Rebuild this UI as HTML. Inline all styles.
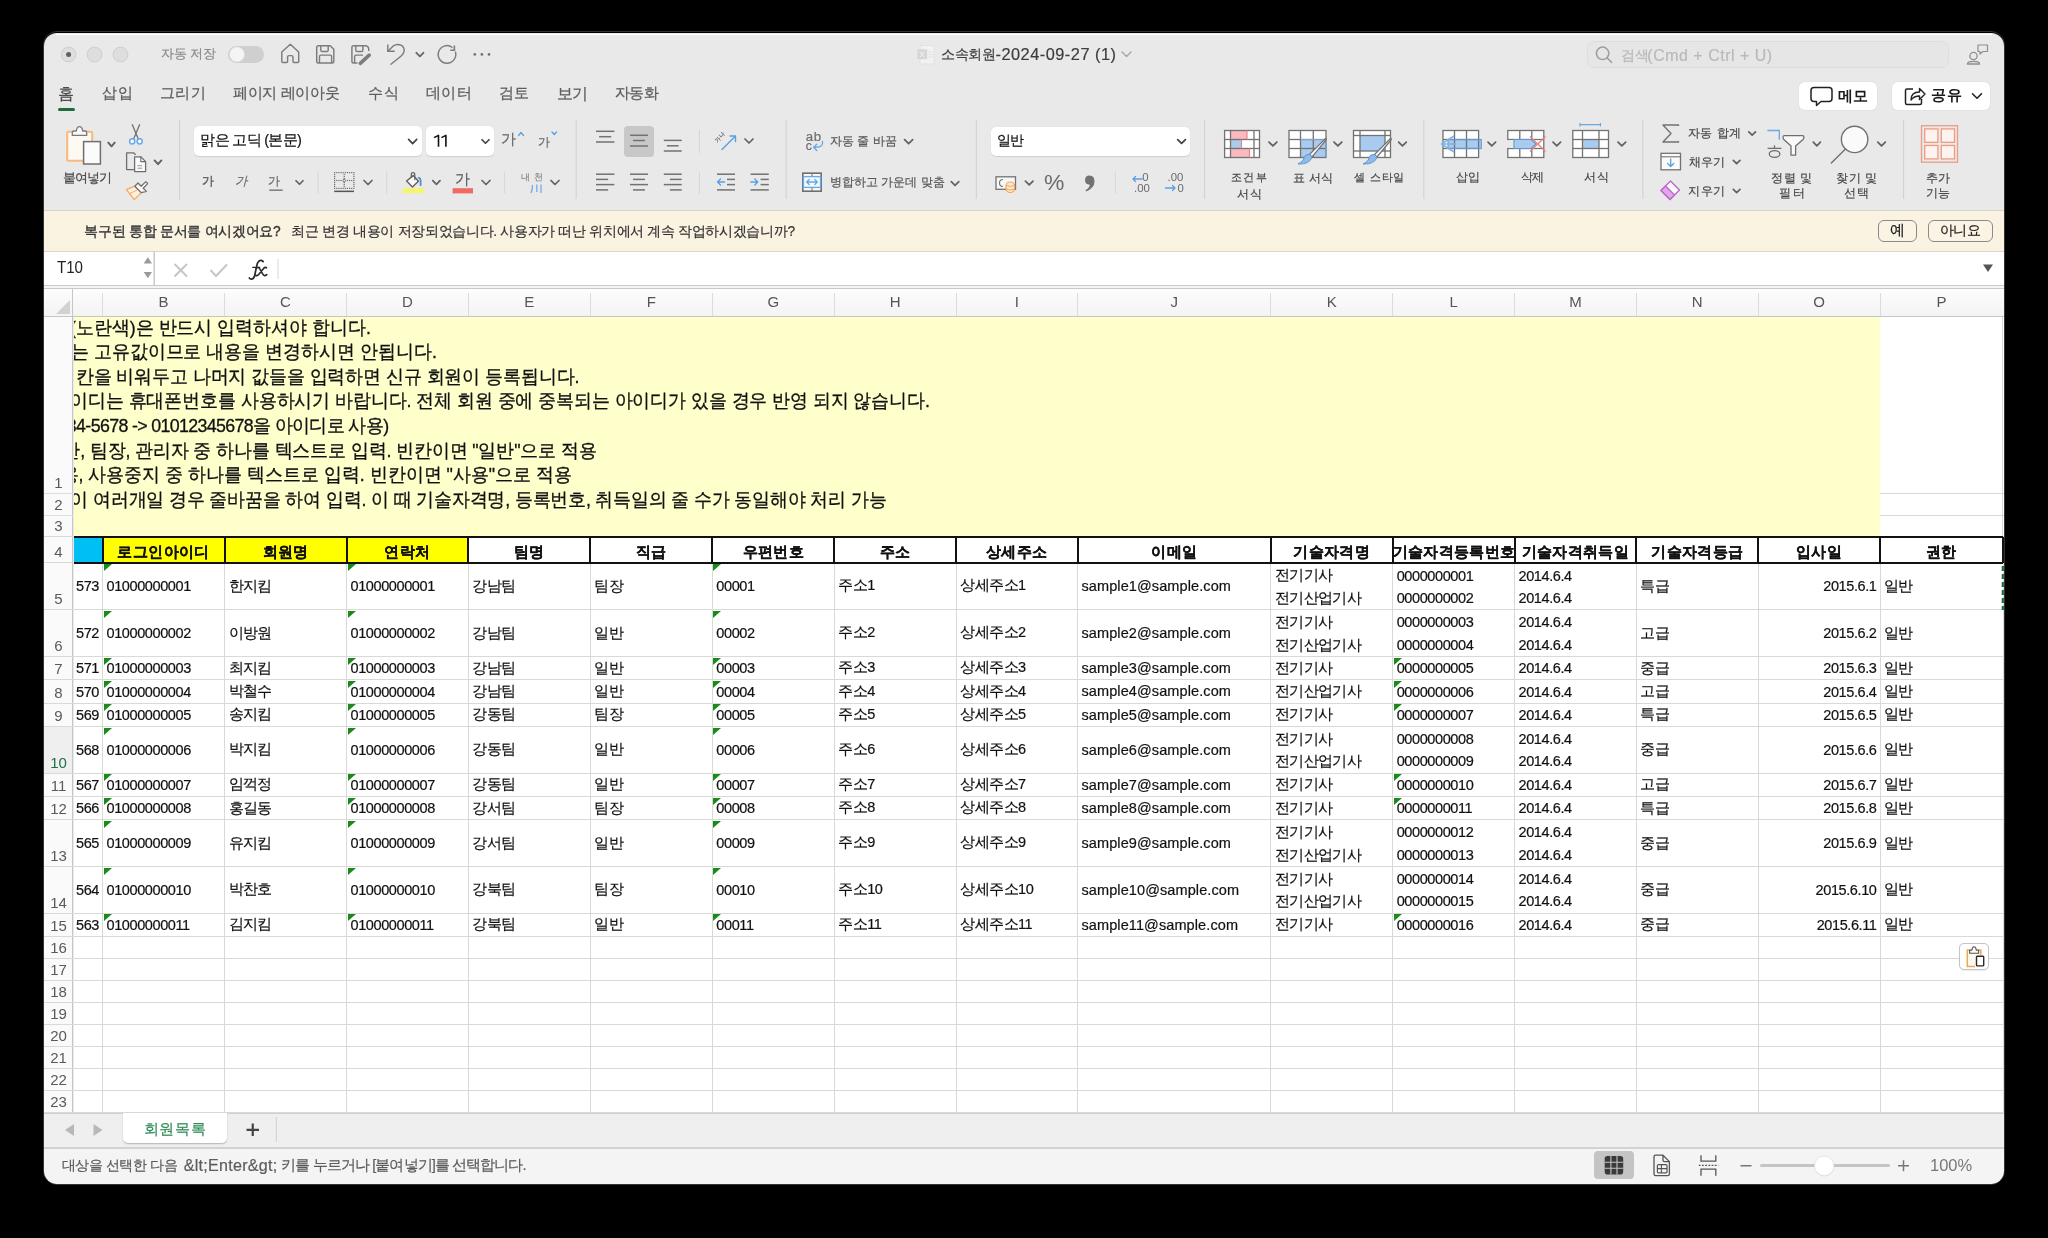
<!DOCTYPE html><html><head><meta charset="utf-8"><style>
*{box-sizing:border-box;margin:0;padding:0}
html,body{width:2048px;height:1238px;overflow:hidden;background:#000;font-family:"Liberation Sans",sans-serif}
#win{position:absolute;left:0;top:0;width:2048px;height:1238px;will-change:transform;clip-path:inset(33px 44px 54px 44px round 13px);background:#e9e9e9}
.a{position:absolute}
.t{position:absolute;white-space:nowrap;line-height:1}
.gl{position:absolute;background:#d9d9d9}
.cell{position:absolute;white-space:nowrap;font-size:14.5px;color:#111;line-height:22.3px;-webkit-text-stroke:0.2px #111}
.num{letter-spacing:-0.4px}
.k{letter-spacing:-0.6px}
.mx{letter-spacing:-0.5px}
.em{letter-spacing:0.1px}
.tri{position:absolute;width:0;height:0;border-top:7.5px solid #1a8a1a;border-right:8px solid transparent}
svg{position:absolute;overflow:visible}
</style></head><body><div class="a" style="left:42.8px;top:31.3px;width:1962.4px;height:1154px;border:1px solid #343434;border-radius:14px"></div><div id="win"><div class="a" style="left:56px;top:33.6px;width:1936px;height:1.2px;background:#fff;z-index:5"></div><div class="a" style="left:44px;top:33px;width:1960px;height:177px;background:#e9e9e9"></div><div class="a" style="left:44px;top:209.5px;width:1960px;height:1px;background:#d6d3cb"></div><div class="a" style="left:44px;top:210.5px;width:1960px;height:40.5px;background:#fbf3e1"></div><div class="a" style="left:44px;top:250.5px;width:1960px;height:1.2px;background:#ddd6c6"></div><div class="a" style="left:44px;top:251.7px;width:1960px;height:33.5px;background:#fff"></div><div class="a" style="left:44px;top:285px;width:1960px;height:1.2px;background:#c9c9c9"></div><div class="a" style="left:44px;top:286.2px;width:1960px;height:1.6px;background:#f4f4f4"></div><div class="a" style="left:44px;top:287.8px;width:1960px;height:1.2px;background:#c9c9c9"></div><div class="a" style="left:44px;top:289px;width:1960px;height:28px;background:linear-gradient(#fdfdfd,#f3f3f3)"></div><div class="a" style="left:44px;top:316px;width:1960px;height:1.2px;background:#c6c6c6"></div><div class="a" style="left:44px;top:317px;width:29px;height:796px;background:#fafafa"></div><div class="a" style="left:72.3px;top:289px;width:1.2px;height:824px;background:#c6c6c6"></div><svg style="left:44px;top:289px" width="29" height="28"><path d="M12 25 L26 25 L26 11 Z" fill="#d2d2d2"/></svg><div class="a" style="left:73.5px;top:317.2px;width:1930px;height:795.5px;background:#fff"></div><div class="a" style="left:102.0px;top:293px;width:1px;height:23px;background:#dcdcdc"></div><div class="t" style="left:102.5px;top:294px;width:122.1px;text-align:center;font-size:15px;color:#555">B</div><div class="a" style="left:224.1px;top:293px;width:1px;height:23px;background:#dcdcdc"></div><div class="t" style="left:224.6px;top:294px;width:121.9px;text-align:center;font-size:15px;color:#555">C</div><div class="a" style="left:346.0px;top:293px;width:1px;height:23px;background:#dcdcdc"></div><div class="t" style="left:346.5px;top:294px;width:121.89999999999998px;text-align:center;font-size:15px;color:#555">D</div><div class="a" style="left:467.9px;top:293px;width:1px;height:23px;background:#dcdcdc"></div><div class="t" style="left:468.4px;top:294px;width:121.89999999999998px;text-align:center;font-size:15px;color:#555">E</div><div class="a" style="left:589.8px;top:293px;width:1px;height:23px;background:#dcdcdc"></div><div class="t" style="left:590.3px;top:294px;width:122.0px;text-align:center;font-size:15px;color:#555">F</div><div class="a" style="left:711.8px;top:293px;width:1px;height:23px;background:#dcdcdc"></div><div class="t" style="left:712.3px;top:294px;width:121.90000000000009px;text-align:center;font-size:15px;color:#555">G</div><div class="a" style="left:833.7px;top:293px;width:1px;height:23px;background:#dcdcdc"></div><div class="t" style="left:834.2px;top:294px;width:121.89999999999998px;text-align:center;font-size:15px;color:#555">H</div><div class="a" style="left:955.6px;top:293px;width:1px;height:23px;background:#dcdcdc"></div><div class="t" style="left:956.1px;top:294px;width:121.39999999999998px;text-align:center;font-size:15px;color:#555">I</div><div class="a" style="left:1077.0px;top:293px;width:1px;height:23px;background:#dcdcdc"></div><div class="t" style="left:1077.5px;top:294px;width:193.4000000000001px;text-align:center;font-size:15px;color:#555">J</div><div class="a" style="left:1270.4px;top:293px;width:1px;height:23px;background:#dcdcdc"></div><div class="t" style="left:1270.9px;top:294px;width:121.79999999999995px;text-align:center;font-size:15px;color:#555">K</div><div class="a" style="left:1392.2px;top:293px;width:1px;height:23px;background:#dcdcdc"></div><div class="t" style="left:1392.7px;top:294px;width:121.79999999999995px;text-align:center;font-size:15px;color:#555">L</div><div class="a" style="left:1514.0px;top:293px;width:1px;height:23px;background:#dcdcdc"></div><div class="t" style="left:1514.5px;top:294px;width:121.90000000000009px;text-align:center;font-size:15px;color:#555">M</div><div class="a" style="left:1635.9px;top:293px;width:1px;height:23px;background:#dcdcdc"></div><div class="t" style="left:1636.4px;top:294px;width:121.79999999999995px;text-align:center;font-size:15px;color:#555">N</div><div class="a" style="left:1757.7px;top:293px;width:1px;height:23px;background:#dcdcdc"></div><div class="t" style="left:1758.2px;top:294px;width:121.79999999999995px;text-align:center;font-size:15px;color:#555">O</div><div class="a" style="left:1879.5px;top:293px;width:1px;height:23px;background:#dcdcdc"></div><div class="t" style="left:1880.0px;top:294px;width:123.0px;text-align:center;font-size:15px;color:#555">P</div><div class="a" style="left:73.5px;top:317.2px;width:1806.5px;height:219.59999999999997px;background:#ffffcc"></div><div class="gl" style="left:44px;top:492.5px;width:29px;height:1px;background:#dedede"></div><div class="gl" style="left:1880px;top:492.5px;width:124px;height:1px"></div><div class="gl" style="left:44px;top:514.7px;width:29px;height:1px;background:#dedede"></div><div class="gl" style="left:1880px;top:514.7px;width:124px;height:1px"></div><div class="gl" style="left:44px;top:536.3px;width:1960px;height:1px"></div><div class="gl" style="left:44px;top:562.3px;width:1960px;height:1px"></div><div class="gl" style="left:44px;top:609.3px;width:1960px;height:1px"></div><div class="gl" style="left:44px;top:656.0px;width:1960px;height:1px"></div><div class="gl" style="left:44px;top:679.3px;width:1960px;height:1px"></div><div class="gl" style="left:44px;top:702.7px;width:1960px;height:1px"></div><div class="gl" style="left:44px;top:726.0px;width:1960px;height:1px"></div><div class="gl" style="left:44px;top:772.7px;width:1960px;height:1px"></div><div class="gl" style="left:44px;top:796.0px;width:1960px;height:1px"></div><div class="gl" style="left:44px;top:819.3px;width:1960px;height:1px"></div><div class="gl" style="left:44px;top:866.0px;width:1960px;height:1px"></div><div class="gl" style="left:44px;top:912.7px;width:1960px;height:1px"></div><div class="gl" style="left:44px;top:935.9px;width:1960px;height:1px"></div><div class="gl" style="left:44px;top:957.9px;width:1960px;height:1px"></div><div class="gl" style="left:44px;top:979.9px;width:1960px;height:1px"></div><div class="gl" style="left:44px;top:1001.9px;width:1960px;height:1px"></div><div class="gl" style="left:44px;top:1023.9000000000001px;width:1960px;height:1px"></div><div class="gl" style="left:44px;top:1045.9px;width:1960px;height:1px"></div><div class="gl" style="left:44px;top:1067.9px;width:1960px;height:1px"></div><div class="gl" style="left:44px;top:1089.9px;width:1960px;height:1px"></div><div class="gl" style="left:44px;top:1112.0px;width:1960px;height:1px"></div><div class="gl" style="left:102.0px;top:536.8px;width:1px;height:575.7px"></div><div class="gl" style="left:224.1px;top:536.8px;width:1px;height:575.7px"></div><div class="gl" style="left:346.0px;top:536.8px;width:1px;height:575.7px"></div><div class="gl" style="left:467.9px;top:536.8px;width:1px;height:575.7px"></div><div class="gl" style="left:589.8px;top:536.8px;width:1px;height:575.7px"></div><div class="gl" style="left:711.8px;top:536.8px;width:1px;height:575.7px"></div><div class="gl" style="left:833.7px;top:536.8px;width:1px;height:575.7px"></div><div class="gl" style="left:955.6px;top:536.8px;width:1px;height:575.7px"></div><div class="gl" style="left:1077.0px;top:536.8px;width:1px;height:575.7px"></div><div class="gl" style="left:1270.4px;top:536.8px;width:1px;height:575.7px"></div><div class="gl" style="left:1392.2px;top:536.8px;width:1px;height:575.7px"></div><div class="gl" style="left:1514.0px;top:536.8px;width:1px;height:575.7px"></div><div class="gl" style="left:1635.9px;top:536.8px;width:1px;height:575.7px"></div><div class="gl" style="left:1757.7px;top:536.8px;width:1px;height:575.7px"></div><div class="gl" style="left:1879.5px;top:536.8px;width:1px;height:575.7px"></div><div class="gl" style="left:2002.5px;top:536.8px;width:1px;height:575.7px"></div><div class="gl" style="left:2001.5px;top:317px;width:1px;height:220px"></div><div class="a" style="left:73.5px;top:536.8px;width:29.0px;height:26.0px;background:#00bff5"></div><div class="a" style="left:102.5px;top:536.8px;width:365.6px;height:26.0px;background:#ffff00"></div><div class="a" style="left:468.1px;top:536.8px;width:1534.9px;height:26.0px;background:#fff"></div><div class="a" style="left:73.5px;top:535.9px;width:1929.5px;height:2px;background:#111"></div><div class="a" style="left:73.5px;top:561.8px;width:1929.5px;height:2px;background:#111"></div><div class="a" style="left:101.5px;top:536.8px;width:2px;height:26.0px;background:#111"></div><div class="a" style="left:223.6px;top:536.8px;width:2px;height:26.0px;background:#111"></div><div class="a" style="left:345.5px;top:536.8px;width:2px;height:26.0px;background:#111"></div><div class="a" style="left:467.4px;top:536.8px;width:2px;height:26.0px;background:#111"></div><div class="a" style="left:589.3px;top:536.8px;width:2px;height:26.0px;background:#111"></div><div class="a" style="left:711.3px;top:536.8px;width:2px;height:26.0px;background:#111"></div><div class="a" style="left:833.2px;top:536.8px;width:2px;height:26.0px;background:#111"></div><div class="a" style="left:955.1px;top:536.8px;width:2px;height:26.0px;background:#111"></div><div class="a" style="left:1076.5px;top:536.8px;width:2px;height:26.0px;background:#111"></div><div class="a" style="left:1269.9px;top:536.8px;width:2px;height:26.0px;background:#111"></div><div class="a" style="left:1391.7px;top:536.8px;width:2px;height:26.0px;background:#111"></div><div class="a" style="left:1513.5px;top:536.8px;width:2px;height:26.0px;background:#111"></div><div class="a" style="left:1635.4px;top:536.8px;width:2px;height:26.0px;background:#111"></div><div class="a" style="left:1757.2px;top:536.8px;width:2px;height:26.0px;background:#111"></div><div class="a" style="left:1879.0px;top:536.8px;width:2px;height:26.0px;background:#111"></div><div class="a" style="left:2002px;top:536.8px;width:2px;height:26.0px;background:#111"></div><div class="cell" style="left:102.5px;top:540.0px;width:122.1px;text-align:center;font-weight:bold;line-height:24.0px;font-size:15px;letter-spacing:0.35px">로그인아이디</div><div class="cell" style="left:224.6px;top:540.0px;width:121.9px;text-align:center;font-weight:bold;line-height:24.0px;font-size:15px;letter-spacing:0.35px">회원명</div><div class="cell" style="left:346.5px;top:540.0px;width:121.89999999999998px;text-align:center;font-weight:bold;line-height:24.0px;font-size:15px;letter-spacing:0.35px">연락처</div><div class="cell" style="left:468.4px;top:540.0px;width:121.89999999999998px;text-align:center;font-weight:bold;line-height:24.0px;font-size:15px;letter-spacing:0.35px">팀명</div><div class="cell" style="left:590.3px;top:540.0px;width:122.0px;text-align:center;font-weight:bold;line-height:24.0px;font-size:15px;letter-spacing:0.35px">직급</div><div class="cell" style="left:712.3px;top:540.0px;width:121.90000000000009px;text-align:center;font-weight:bold;line-height:24.0px;font-size:15px;letter-spacing:0.35px">우편번호</div><div class="cell" style="left:834.2px;top:540.0px;width:121.89999999999998px;text-align:center;font-weight:bold;line-height:24.0px;font-size:15px;letter-spacing:0.35px">주소</div><div class="cell" style="left:956.1px;top:540.0px;width:121.39999999999998px;text-align:center;font-weight:bold;line-height:24.0px;font-size:15px;letter-spacing:0.35px">상세주소</div><div class="cell" style="left:1077.5px;top:540.0px;width:193.4000000000001px;text-align:center;font-weight:bold;line-height:24.0px;font-size:15px;letter-spacing:0.35px">이메일</div><div class="cell" style="left:1270.9px;top:540.0px;width:121.79999999999995px;text-align:center;font-weight:bold;line-height:24.0px;font-size:15px;letter-spacing:0.35px">기술자격명</div><div class="cell" style="left:1392.7px;top:540.0px;width:121.79999999999995px;text-align:center;font-weight:bold;line-height:24.0px;font-size:15px;letter-spacing:0.35px">기술자격등록번호</div><div class="cell" style="left:1514.5px;top:540.0px;width:121.90000000000009px;text-align:center;font-weight:bold;line-height:24.0px;font-size:15px;letter-spacing:0.35px">기술자격취득일</div><div class="cell" style="left:1636.4px;top:540.0px;width:121.79999999999995px;text-align:center;font-weight:bold;line-height:24.0px;font-size:15px;letter-spacing:0.35px">기술자격등급</div><div class="cell" style="left:1758.2px;top:540.0px;width:121.79999999999995px;text-align:center;font-weight:bold;line-height:24.0px;font-size:15px;letter-spacing:0.35px">입사일</div><div class="cell" style="left:1880.0px;top:540.0px;width:123.0px;text-align:center;font-weight:bold;line-height:24.0px;font-size:15px;letter-spacing:0.35px">권한</div><div class="cell num" style="left:73px;top:575.35px;width:26.0px;text-align:right">573</div><div class="cell num" style="left:106.5px;top:575.35px">01000000001</div><div class="cell k" style="left:228.6px;top:574.75px">한지킴</div><div class="cell num" style="left:350.5px;top:575.35px">01000000001</div><div class="cell k" style="left:472.4px;top:574.75px">강남팀</div><div class="cell k" style="left:594.3px;top:574.75px">팀장</div><div class="cell num" style="left:716.3px;top:575.35px">00001</div><div class="cell mx" style="left:838.2px;top:574.35px">주소1</div><div class="cell mx" style="left:960.1px;top:574.35px">상세주소1</div><div class="cell em" style="left:1081.5px;top:575.15px">sample1@sample.com</div><div class="cell k" style="left:1274.9px;top:564.4px">전기기사<br>전기산업기사</div><div class="cell num" style="left:1396.7px;top:564.6px">0000000001<br>0000000002</div><div class="cell num" style="left:1518.5px;top:564.6px">2014.6.4<br>2014.6.4</div><div class="cell k" style="left:1640.4px;top:574.75px">특급</div><div class="cell num" style="left:1758.2px;top:575.35px;width:118.29999999999995px;text-align:right">2015.6.1</div><div class="cell k" style="left:1884.0px;top:574.75px">일반</div><div class="tri" style="left:103.5px;top:564.0999999999999px"></div><div class="tri" style="left:347.5px;top:564.0999999999999px"></div><div class="tri" style="left:713.3px;top:564.0999999999999px"></div><div class="cell num" style="left:73px;top:622.2px;width:26.0px;text-align:right">572</div><div class="cell num" style="left:106.5px;top:622.2px">01000000002</div><div class="cell k" style="left:228.6px;top:621.6px">이방원</div><div class="cell num" style="left:350.5px;top:622.2px">01000000002</div><div class="cell k" style="left:472.4px;top:621.6px">강남팀</div><div class="cell k" style="left:594.3px;top:621.6px">일반</div><div class="cell num" style="left:716.3px;top:622.2px">00002</div><div class="cell mx" style="left:838.2px;top:621.2px">주소2</div><div class="cell mx" style="left:960.1px;top:621.2px">상세주소2</div><div class="cell em" style="left:1081.5px;top:622.0px">sample2@sample.com</div><div class="cell k" style="left:1274.9px;top:611.25px">전기기사<br>전기산업기사</div><div class="cell num" style="left:1396.7px;top:611.45px">0000000003<br>0000000004</div><div class="cell num" style="left:1518.5px;top:611.45px">2014.6.4<br>2014.6.4</div><div class="cell k" style="left:1640.4px;top:621.6px">고급</div><div class="cell num" style="left:1758.2px;top:622.2px;width:118.29999999999995px;text-align:right">2015.6.2</div><div class="cell k" style="left:1884.0px;top:621.6px">일반</div><div class="tri" style="left:103.5px;top:610.8px"></div><div class="tri" style="left:347.5px;top:610.8px"></div><div class="tri" style="left:713.3px;top:610.8px"></div><div class="cell num" style="left:73px;top:657.2px;width:26.0px;text-align:right">571</div><div class="cell num" style="left:106.5px;top:657.2px">01000000003</div><div class="cell k" style="left:228.6px;top:656.6px">최지킴</div><div class="cell num" style="left:350.5px;top:657.2px">01000000003</div><div class="cell k" style="left:472.4px;top:656.6px">강남팀</div><div class="cell k" style="left:594.3px;top:656.6px">일반</div><div class="cell num" style="left:716.3px;top:657.2px">00003</div><div class="cell mx" style="left:838.2px;top:656.2px">주소3</div><div class="cell mx" style="left:960.1px;top:656.2px">상세주소3</div><div class="cell em" style="left:1081.5px;top:657.0px">sample3@sample.com</div><div class="cell k" style="left:1274.9px;top:656.6px">전기기사</div><div class="cell num" style="left:1396.7px;top:657.2px">0000000005</div><div class="cell num" style="left:1518.5px;top:657.2px">2014.6.4</div><div class="cell k" style="left:1640.4px;top:656.6px">중급</div><div class="cell num" style="left:1758.2px;top:657.2px;width:118.29999999999995px;text-align:right">2015.6.3</div><div class="cell k" style="left:1884.0px;top:656.6px">일반</div><div class="tri" style="left:103.5px;top:657.5px"></div><div class="tri" style="left:347.5px;top:657.5px"></div><div class="tri" style="left:713.3px;top:657.5px"></div><div class="tri" style="left:1393.7px;top:657.5px"></div><div class="cell num" style="left:73px;top:680.5500000000001px;width:26.0px;text-align:right">570</div><div class="cell num" style="left:106.5px;top:680.5500000000001px">01000000004</div><div class="cell k" style="left:228.6px;top:679.95px">박철수</div><div class="cell num" style="left:350.5px;top:680.5500000000001px">01000000004</div><div class="cell k" style="left:472.4px;top:679.95px">강남팀</div><div class="cell k" style="left:594.3px;top:679.95px">일반</div><div class="cell num" style="left:716.3px;top:680.5500000000001px">00004</div><div class="cell mx" style="left:838.2px;top:679.5500000000001px">주소4</div><div class="cell mx" style="left:960.1px;top:679.5500000000001px">상세주소4</div><div class="cell em" style="left:1081.5px;top:680.35px">sample4@sample.com</div><div class="cell k" style="left:1274.9px;top:679.95px">전기산업기사</div><div class="cell num" style="left:1396.7px;top:680.5500000000001px">0000000006</div><div class="cell num" style="left:1518.5px;top:680.5500000000001px">2014.6.4</div><div class="cell k" style="left:1640.4px;top:679.95px">고급</div><div class="cell num" style="left:1758.2px;top:680.5500000000001px;width:118.29999999999995px;text-align:right">2015.6.4</div><div class="cell k" style="left:1884.0px;top:679.95px">일반</div><div class="tri" style="left:103.5px;top:680.8px"></div><div class="tri" style="left:347.5px;top:680.8px"></div><div class="tri" style="left:713.3px;top:680.8px"></div><div class="tri" style="left:1393.7px;top:680.8px"></div><div class="cell num" style="left:73px;top:703.9000000000001px;width:26.0px;text-align:right">569</div><div class="cell num" style="left:106.5px;top:703.9000000000001px">01000000005</div><div class="cell k" style="left:228.6px;top:703.3000000000001px">송지킴</div><div class="cell num" style="left:350.5px;top:703.9000000000001px">01000000005</div><div class="cell k" style="left:472.4px;top:703.3000000000001px">강동팀</div><div class="cell k" style="left:594.3px;top:703.3000000000001px">팀장</div><div class="cell num" style="left:716.3px;top:703.9000000000001px">00005</div><div class="cell mx" style="left:838.2px;top:702.9000000000001px">주소5</div><div class="cell mx" style="left:960.1px;top:702.9000000000001px">상세주소5</div><div class="cell em" style="left:1081.5px;top:703.7px">sample5@sample.com</div><div class="cell k" style="left:1274.9px;top:703.3000000000001px">전기기사</div><div class="cell num" style="left:1396.7px;top:703.9000000000001px">0000000007</div><div class="cell num" style="left:1518.5px;top:703.9000000000001px">2014.6.4</div><div class="cell k" style="left:1640.4px;top:703.3000000000001px">특급</div><div class="cell num" style="left:1758.2px;top:703.9000000000001px;width:118.29999999999995px;text-align:right">2015.6.5</div><div class="cell k" style="left:1884.0px;top:703.3000000000001px">일반</div><div class="tri" style="left:103.5px;top:704.2px"></div><div class="tri" style="left:347.5px;top:704.2px"></div><div class="tri" style="left:713.3px;top:704.2px"></div><div class="tri" style="left:1393.7px;top:704.2px"></div><div class="cell num" style="left:73px;top:738.9000000000001px;width:26.0px;text-align:right">568</div><div class="cell num" style="left:106.5px;top:738.9000000000001px">01000000006</div><div class="cell k" style="left:228.6px;top:738.3000000000001px">박지킴</div><div class="cell num" style="left:350.5px;top:738.9000000000001px">01000000006</div><div class="cell k" style="left:472.4px;top:738.3000000000001px">강동팀</div><div class="cell k" style="left:594.3px;top:738.3000000000001px">일반</div><div class="cell num" style="left:716.3px;top:738.9000000000001px">00006</div><div class="cell mx" style="left:838.2px;top:737.9000000000001px">주소6</div><div class="cell mx" style="left:960.1px;top:737.9000000000001px">상세주소6</div><div class="cell em" style="left:1081.5px;top:738.7px">sample6@sample.com</div><div class="cell k" style="left:1274.9px;top:727.95px">전기기사<br>전기산업기사</div><div class="cell num" style="left:1396.7px;top:728.1500000000001px">0000000008<br>0000000009</div><div class="cell num" style="left:1518.5px;top:728.1500000000001px">2014.6.4<br>2014.6.4</div><div class="cell k" style="left:1640.4px;top:738.3000000000001px">중급</div><div class="cell num" style="left:1758.2px;top:738.9000000000001px;width:118.29999999999995px;text-align:right">2015.6.6</div><div class="cell k" style="left:1884.0px;top:738.3000000000001px">일반</div><div class="tri" style="left:103.5px;top:727.5px"></div><div class="tri" style="left:347.5px;top:727.5px"></div><div class="tri" style="left:713.3px;top:727.5px"></div><div class="cell num" style="left:73px;top:773.9000000000001px;width:26.0px;text-align:right">567</div><div class="cell num" style="left:106.5px;top:773.9000000000001px">01000000007</div><div class="cell k" style="left:228.6px;top:773.3000000000001px">임꺽정</div><div class="cell num" style="left:350.5px;top:773.9000000000001px">01000000007</div><div class="cell k" style="left:472.4px;top:773.3000000000001px">강동팀</div><div class="cell k" style="left:594.3px;top:773.3000000000001px">일반</div><div class="cell num" style="left:716.3px;top:773.9000000000001px">00007</div><div class="cell mx" style="left:838.2px;top:772.9000000000001px">주소7</div><div class="cell mx" style="left:960.1px;top:772.9000000000001px">상세주소7</div><div class="cell em" style="left:1081.5px;top:773.7px">sample7@sample.com</div><div class="cell k" style="left:1274.9px;top:773.3000000000001px">전기기사</div><div class="cell num" style="left:1396.7px;top:773.9000000000001px">0000000010</div><div class="cell num" style="left:1518.5px;top:773.9000000000001px">2014.6.4</div><div class="cell k" style="left:1640.4px;top:773.3000000000001px">고급</div><div class="cell num" style="left:1758.2px;top:773.9000000000001px;width:118.29999999999995px;text-align:right">2015.6.7</div><div class="cell k" style="left:1884.0px;top:773.3000000000001px">일반</div><div class="tri" style="left:103.5px;top:774.2px"></div><div class="tri" style="left:347.5px;top:774.2px"></div><div class="tri" style="left:713.3px;top:774.2px"></div><div class="tri" style="left:1393.7px;top:774.2px"></div><div class="cell num" style="left:73px;top:797.2px;width:26.0px;text-align:right">566</div><div class="cell num" style="left:106.5px;top:797.2px">01000000008</div><div class="cell k" style="left:228.6px;top:796.6px">홍길동</div><div class="cell num" style="left:350.5px;top:797.2px">01000000008</div><div class="cell k" style="left:472.4px;top:796.6px">강서팀</div><div class="cell k" style="left:594.3px;top:796.6px">팀장</div><div class="cell num" style="left:716.3px;top:797.2px">00008</div><div class="cell mx" style="left:838.2px;top:796.2px">주소8</div><div class="cell mx" style="left:960.1px;top:796.2px">상세주소8</div><div class="cell em" style="left:1081.5px;top:797.0px">sample8@sample.com</div><div class="cell k" style="left:1274.9px;top:796.6px">전기기사</div><div class="cell num" style="left:1396.7px;top:797.2px">0000000011</div><div class="cell num" style="left:1518.5px;top:797.2px">2014.6.4</div><div class="cell k" style="left:1640.4px;top:796.6px">특급</div><div class="cell num" style="left:1758.2px;top:797.2px;width:118.29999999999995px;text-align:right">2015.6.8</div><div class="cell k" style="left:1884.0px;top:796.6px">일반</div><div class="tri" style="left:103.5px;top:797.5px"></div><div class="tri" style="left:347.5px;top:797.5px"></div><div class="tri" style="left:713.3px;top:797.5px"></div><div class="tri" style="left:1393.7px;top:797.5px"></div><div class="cell num" style="left:73px;top:832.2px;width:26.0px;text-align:right">565</div><div class="cell num" style="left:106.5px;top:832.2px">01000000009</div><div class="cell k" style="left:228.6px;top:831.6px">유지킴</div><div class="cell num" style="left:350.5px;top:832.2px">01000000009</div><div class="cell k" style="left:472.4px;top:831.6px">강서팀</div><div class="cell k" style="left:594.3px;top:831.6px">일반</div><div class="cell num" style="left:716.3px;top:832.2px">00009</div><div class="cell mx" style="left:838.2px;top:831.2px">주소9</div><div class="cell mx" style="left:960.1px;top:831.2px">상세주소9</div><div class="cell em" style="left:1081.5px;top:832.0px">sample9@sample.com</div><div class="cell k" style="left:1274.9px;top:821.25px">전기기사<br>전기산업기사</div><div class="cell num" style="left:1396.7px;top:821.45px">0000000012<br>0000000013</div><div class="cell num" style="left:1518.5px;top:821.45px">2014.6.4<br>2014.6.4</div><div class="cell k" style="left:1640.4px;top:831.6px">중급</div><div class="cell num" style="left:1758.2px;top:832.2px;width:118.29999999999995px;text-align:right">2015.6.9</div><div class="cell k" style="left:1884.0px;top:831.6px">일반</div><div class="tri" style="left:103.5px;top:820.8px"></div><div class="tri" style="left:347.5px;top:820.8px"></div><div class="tri" style="left:713.3px;top:820.8px"></div><div class="cell num" style="left:73px;top:878.9000000000001px;width:26.0px;text-align:right">564</div><div class="cell num" style="left:106.5px;top:878.9000000000001px">01000000010</div><div class="cell k" style="left:228.6px;top:878.3000000000001px">박찬호</div><div class="cell num" style="left:350.5px;top:878.9000000000001px">01000000010</div><div class="cell k" style="left:472.4px;top:878.3000000000001px">강북팀</div><div class="cell k" style="left:594.3px;top:878.3000000000001px">팀장</div><div class="cell num" style="left:716.3px;top:878.9000000000001px">00010</div><div class="cell mx" style="left:838.2px;top:877.9000000000001px">주소10</div><div class="cell mx" style="left:960.1px;top:877.9000000000001px">상세주소10</div><div class="cell em" style="left:1081.5px;top:878.7px">sample10@sample.com</div><div class="cell k" style="left:1274.9px;top:867.95px">전기기사<br>전기산업기사</div><div class="cell num" style="left:1396.7px;top:868.1500000000001px">0000000014<br>0000000015</div><div class="cell num" style="left:1518.5px;top:868.1500000000001px">2014.6.4<br>2014.6.4</div><div class="cell k" style="left:1640.4px;top:878.3000000000001px">중급</div><div class="cell num" style="left:1758.2px;top:878.9000000000001px;width:118.29999999999995px;text-align:right">2015.6.10</div><div class="cell k" style="left:1884.0px;top:878.3000000000001px">일반</div><div class="tri" style="left:103.5px;top:867.5px"></div><div class="tri" style="left:347.5px;top:867.5px"></div><div class="tri" style="left:713.3px;top:867.5px"></div><div class="cell num" style="left:73px;top:913.85px;width:26.0px;text-align:right">563</div><div class="cell num" style="left:106.5px;top:913.85px">01000000011</div><div class="cell k" style="left:228.6px;top:913.25px">김지킴</div><div class="cell num" style="left:350.5px;top:913.85px">01000000011</div><div class="cell k" style="left:472.4px;top:913.25px">강북팀</div><div class="cell k" style="left:594.3px;top:913.25px">일반</div><div class="cell num" style="left:716.3px;top:913.85px">00011</div><div class="cell mx" style="left:838.2px;top:912.85px">주소11</div><div class="cell mx" style="left:960.1px;top:912.85px">상세주소11</div><div class="cell em" style="left:1081.5px;top:913.65px">sample11@sample.com</div><div class="cell k" style="left:1274.9px;top:913.25px">전기기사</div><div class="cell num" style="left:1396.7px;top:913.85px">0000000016</div><div class="cell num" style="left:1518.5px;top:913.85px">2014.6.4</div><div class="cell k" style="left:1640.4px;top:913.25px">중급</div><div class="cell num" style="left:1758.2px;top:913.85px;width:118.29999999999995px;text-align:right">2015.6.11</div><div class="cell k" style="left:1884.0px;top:913.25px">일반</div><div class="tri" style="left:103.5px;top:914.2px"></div><div class="tri" style="left:347.5px;top:914.2px"></div><div class="tri" style="left:713.3px;top:914.2px"></div><div class="tri" style="left:1393.7px;top:914.2px"></div><div class="t" style="left:44px;top:474.5px;width:29px;text-align:center;font-size:15px;color:#5a5a5a">1</div><div class="t" style="left:44px;top:496.70000000000005px;width:29px;text-align:center;font-size:15px;color:#5a5a5a">2</div><div class="t" style="left:44px;top:518.3px;width:29px;text-align:center;font-size:15px;color:#5a5a5a">3</div><div class="t" style="left:44px;top:544.3px;width:29px;text-align:center;font-size:15px;color:#5a5a5a">4</div><div class="t" style="left:44px;top:591.3px;width:29px;text-align:center;font-size:15px;color:#5a5a5a">5</div><div class="t" style="left:44px;top:638.0px;width:29px;text-align:center;font-size:15px;color:#5a5a5a">6</div><div class="t" style="left:44px;top:661.3px;width:29px;text-align:center;font-size:15px;color:#5a5a5a">7</div><div class="t" style="left:44px;top:684.7px;width:29px;text-align:center;font-size:15px;color:#5a5a5a">8</div><div class="t" style="left:44px;top:708.0px;width:29px;text-align:center;font-size:15px;color:#5a5a5a">9</div><div class="a" style="left:44px;top:727.0px;width:28.3px;height:45.700000000000045px;background:#efefef"></div><div class="t" style="left:44px;top:754.7px;width:29px;text-align:center;font-size:15px;color:#1e7145">10</div><div class="t" style="left:44px;top:778.0px;width:29px;text-align:center;font-size:15px;color:#5a5a5a">11</div><div class="t" style="left:44px;top:801.3px;width:29px;text-align:center;font-size:15px;color:#5a5a5a">12</div><div class="t" style="left:44px;top:848.0px;width:29px;text-align:center;font-size:15px;color:#5a5a5a">13</div><div class="t" style="left:44px;top:894.7px;width:29px;text-align:center;font-size:15px;color:#5a5a5a">14</div><div class="t" style="left:44px;top:917.9px;width:29px;text-align:center;font-size:15px;color:#5a5a5a">15</div><div class="t" style="left:44px;top:939.9px;width:29px;text-align:center;font-size:15px;color:#5a5a5a">16</div><div class="t" style="left:44px;top:961.9px;width:29px;text-align:center;font-size:15px;color:#5a5a5a">17</div><div class="t" style="left:44px;top:983.9px;width:29px;text-align:center;font-size:15px;color:#5a5a5a">18</div><div class="t" style="left:44px;top:1005.9000000000001px;width:29px;text-align:center;font-size:15px;color:#5a5a5a">19</div><div class="t" style="left:44px;top:1027.9px;width:29px;text-align:center;font-size:15px;color:#5a5a5a">20</div><div class="t" style="left:44px;top:1049.9px;width:29px;text-align:center;font-size:15px;color:#5a5a5a">21</div><div class="t" style="left:44px;top:1071.9px;width:29px;text-align:center;font-size:15px;color:#5a5a5a">22</div><div class="t" style="left:44px;top:1094.0px;width:29px;text-align:center;font-size:15px;color:#5a5a5a">23</div><div class="a" style="left:73.5px;top:317.2px;width:1806px;height:219px;overflow:hidden"><div class="t" style="left:2.4000000000000057px;top:2.5px;font-size:17.8px;color:#111;letter-spacing:-0.037px;-webkit-text-stroke:0.3px #111;transform:scaleY(1.06);transform-origin:0 55%"><span style="position:absolute;right:100%;white-space:pre">필수항목(</span>노란색)은 반드시 입력하셔야 합니다.</div><div class="t" style="left:20.099999999999994px;top:27.1px;font-size:17.8px;color:#111;letter-spacing:-0.019px;-webkit-text-stroke:0.3px #111;transform:scaleY(1.06);transform-origin:0 55%"><span style="position:absolute;right:100%;white-space:pre">아이디는 </span>고유값이므로 내용을 변경하시면 안됩니다.</div><div class="t" style="left:2.200000000000003px;top:51.7px;font-size:17.8px;color:#111;letter-spacing:-0.115px;-webkit-text-stroke:0.3px #111;transform:scaleY(1.06);transform-origin:0 55%"><span style="position:absolute;right:100%;white-space:pre">아이디 </span>칸을 비워두고 나머지 값들을 입력하면 신규 회원이 등록됩니다.</div><div class="t" style="left:55.099999999999994px;top:76.30000000000001px;font-size:17.8px;color:#111;letter-spacing:-0.109px;-webkit-text-stroke:0.3px #111;transform:scaleY(1.06);transform-origin:0 55%"><span style="position:absolute;right:100%;white-space:pre">아이디는 </span>휴대폰번호를 사용하시기 바랍니다. 전체 회원 중에 중복되는 아이디가 있을 경우 반영 되지 않습니다.</div><div class="t" style="left:2.5999999999999943px;top:100.9px;font-size:17.8px;color:#111;letter-spacing:-0.637px;-webkit-text-stroke:0.3px #111;transform:scaleY(1.06);transform-origin:0 55%"><span style="position:absolute;right:100%;white-space:pre">(010-123</span>4-5678 -&gt; 01012345678을 아이디로 사용)</div><div class="t" style="left:16.299999999999997px;top:125.5px;font-size:17.8px;color:#111;letter-spacing:-0.142px;-webkit-text-stroke:0.3px #111;transform:scaleY(1.06);transform-origin:0 55%"><span style="position:absolute;right:100%;white-space:pre">직급은 일반, </span>팀장, 관리자 중 하나를 텍스트로 입력. 빈칸이면 &quot;일반&quot;으로 적용</div><div class="t" style="left:14.900000000000006px;top:150.10000000000002px;font-size:17.8px;color:#111;letter-spacing:-0.021px;-webkit-text-stroke:0.3px #111;transform:scaleY(1.06);transform-origin:0 55%"><span style="position:absolute;right:100%;white-space:pre">상태는 사용, </span>사용중지 중 하나를 텍스트로 입력. 빈칸이면 &quot;사용&quot;으로 적용</div><div class="t" style="left:19.5px;top:174.70000000000002px;font-size:17.8px;color:#111;letter-spacing:-0.184px;-webkit-text-stroke:0.3px #111;transform:scaleY(1.06);transform-origin:0 55%"><span style="position:absolute;right:100%;white-space:pre">기술자격이 </span>여러개일 경우 줄바꿈을 하여 입력. 이 때 기술자격명, 등록번호, 취득일의 줄 수가 동일해야 처리 가능</div></div><div class="a" style="left:228.3px;top:45.9px;width:35.39999999999998px;height:17.1px;background:#cfcfcf;border-radius:9px"></div><div class="a" style="left:1587px;top:41.3px;width:361.5px;height:26.900000000000006px;background:#e6e6e6;border:1px solid #dddddd;border-radius:7px"></div><div class="a" style="left:58px;top:107.7px;width:16.5px;height:3.700000000000003px;background:#1e6b3e;border-radius:2px"></div><div class="a" style="left:1799px;top:81.7px;width:78px;height:28.299999999999997px;background:#fff;border-radius:6px;box-shadow:0 0 0 0.6px #dedede"></div><div class="a" style="left:1892px;top:81.7px;width:98px;height:28.299999999999997px;background:#fff;border-radius:6px;box-shadow:0 0 0 0.6px #dedede"></div><div class="a" style="left:194px;top:126px;width:227.8px;height:30.30000000000001px;background:#fff;border-radius:5px;box-shadow:0 0.5px 1px rgba(0,0,0,0.12)"></div><div class="a" style="left:426px;top:126.4px;width:68px;height:29.69999999999999px;background:#fff;border-radius:5px;box-shadow:0 0.5px 1px rgba(0,0,0,0.12)"></div><div class="a" style="left:623.7px;top:126px;width:30.299999999999955px;height:30.599999999999994px;background:#c8c8c8;border-radius:4px"></div><div class="a" style="left:991.2px;top:126.6px;width:198.79999999999995px;height:29.700000000000017px;background:#fff;border-radius:5px;box-shadow:0 0.5px 1px rgba(0,0,0,0.12)"></div><div class="a" style="left:1878.3px;top:219.5px;width:38.299999999999955px;height:22.5px;border:1.2px solid #8a8a8a;border-radius:6px;background:#fbf4e4"></div><div class="a" style="left:1927.7px;top:219.5px;width:65.5px;height:22.5px;border:1.2px solid #8a8a8a;border-radius:6px;background:#fbf4e4"></div><div class="a" style="left:44px;top:1112.5px;width:1960px;height:35.5px;background:#efefef"></div><div class="a" style="left:44px;top:1112.5px;width:1960px;height:1.5px;background:#cfcfcf"></div><div class="a" style="left:44px;top:1147.3px;width:1960px;height:1.5px;background:#d2d2d2"></div><div class="a" style="left:44px;top:1148.8px;width:1960px;height:35.200000000000045px;background:#f4f4f4"></div><div class="a" style="left:122.8px;top:1113px;width:104.39999999999999px;height:29.5px;background:#fff;border-radius:0 0 5px 5px;box-shadow:0 1px 1.5px rgba(0,0,0,0.25)"></div><div class="a" style="left:1594.2px;top:1151.1px;width:39.799999999999955px;height:28.200000000000045px;background:#c4c4c4;border-radius:4px"></div><div class="a" style="left:1760px;top:1164.3px;width:129.5px;height:3.2000000000000455px;background:#c4c4c4;border-radius:2px"></div><div class="a" style="left:1959.2px;top:943px;width:29.899999999999864px;height:27.100000000000023px;background:#fff;border:1.1px solid #c4c4c4;border-radius:5px;box-shadow:0 0.5px 1px rgba(0,0,0,0.08)"></div><div class="t" style="left:160.90px;top:48.40px;font-size:12.60px;color:#8c8c8c;letter-spacing:-0.075px;;-webkit-text-stroke:0.2px currentColor">자동 저장</div><div class="t" style="left:941.00px;top:47.20px;font-size:14.28px;color:#3d3d3d;letter-spacing:-0.467px;;-webkit-text-stroke:0.2px currentColor">소속회원</div><div class="t" style="left:995.50px;top:46.20px;font-size:16.34px;color:#3d3d3d;letter-spacing:0.500px;;-webkit-text-stroke:0.2px currentColor">-2024-09-27 (1)</div><div class="t" style="left:1621.40px;top:49.10px;font-size:13.67px;color:#b9b9b9;letter-spacing:-0.700px;;-webkit-text-stroke:0.2px currentColor">검색</div><div class="t" style="left:1647.30px;top:48.40px;font-size:15.92px;color:#b9b9b9;letter-spacing:0.547px;;-webkit-text-stroke:0.2px currentColor">(Cmd + Ctrl + U)</div><div class="t" style="left:57.60px;top:85.60px;font-size:15.65px;color:#4d4d4d;letter-spacing:0.000px;-webkit-text-stroke:0.25px currentColor">홈</div><div class="t" style="left:102.30px;top:84.60px;font-size:15.35px;color:#5e5e5e;letter-spacing:0.400px;-webkit-text-stroke:0.25px currentColor">삽입</div><div class="t" style="left:160.00px;top:84.60px;font-size:15.45px;color:#5e5e5e;letter-spacing:0.350px;-webkit-text-stroke:0.25px currentColor">그리기</div><div class="t" style="left:233.00px;top:84.60px;font-size:15.17px;color:#5e5e5e;letter-spacing:-0.371px;-webkit-text-stroke:0.25px currentColor">페이지 레이아웃</div><div class="t" style="left:368.00px;top:84.60px;font-size:15.49px;color:#5e5e5e;letter-spacing:0.600px;-webkit-text-stroke:0.25px currentColor">수식</div><div class="t" style="left:426.00px;top:84.60px;font-size:15.40px;color:#5e5e5e;letter-spacing:0.350px;-webkit-text-stroke:0.25px currentColor">데이터</div><div class="t" style="left:499.00px;top:84.60px;font-size:15.27px;color:#5e5e5e;letter-spacing:-0.300px;-webkit-text-stroke:0.25px currentColor">검토</div><div class="t" style="left:557.00px;top:85.60px;font-size:15.60px;color:#5e5e5e;letter-spacing:-1.000px;-webkit-text-stroke:0.25px currentColor">보기</div><div class="t" style="left:614.60px;top:84.60px;font-size:15.21px;color:#5e5e5e;letter-spacing:-0.300px;-webkit-text-stroke:0.25px currentColor">자동화</div><div class="t" style="left:1837.80px;top:88.90px;font-size:14.68px;color:#1a1a1a;letter-spacing:-0.100px;font-weight:bold">메모</div><div class="t" style="left:1931.00px;top:86.90px;font-size:15.08px;color:#1a1a1a;letter-spacing:0.500px;font-weight:bold">공유</div><div class="t" style="left:63.30px;top:171.60px;font-size:12.53px;color:#484848;letter-spacing:-1.100px;;-webkit-text-stroke:0.2px currentColor">붙여넣기</div><div class="t" style="left:200.40px;top:132.60px;font-size:14.55px;color:#111;letter-spacing:-0.711px;;-webkit-text-stroke:0.2px currentColor">맑은 고딕 (본문)</div><div class="t" style="left:501.40px;top:131.00px;font-size:15.22px;color:#6a6a6a;letter-spacing:0.000px;;-webkit-text-stroke:0.2px currentColor">가</div><div class="t" style="left:538.20px;top:135.50px;font-size:12.17px;color:#6a6a6a;letter-spacing:0.000px;;-webkit-text-stroke:0.2px currentColor">가</div><div class="t" style="left:201.70px;top:175.00px;font-size:12.39px;color:#6a6a6a;letter-spacing:0.000px;font-weight:bold">가</div><div class="t" style="left:234.70px;top:175.00px;font-size:12.39px;color:#6a6a6a;letter-spacing:0.000px;font-style:italic;-webkit-text-stroke:0.2px currentColor">가</div><div class="t" style="left:268.30px;top:175.00px;font-size:12.39px;color:#6a6a6a;letter-spacing:0.000px;;-webkit-text-stroke:0.2px currentColor">가</div><div class="t" style="left:455.00px;top:171.60px;font-size:14.67px;color:#606060;letter-spacing:0.000px;;-webkit-text-stroke:0.2px currentColor">가</div><div class="t" style="left:521.00px;top:172.00px;font-size:9.41px;color:#8a8a8a;letter-spacing:4.000px;;-webkit-text-stroke:0.2px currentColor">내천</div><div class="t" style="left:715.50px;top:135.50px;font-size:5.51px;color:#6a6a6a;letter-spacing:0.000px;transform:rotate(-45deg);transform-origin:30% 80%;-webkit-text-stroke:0.2px currentColor">가나</div><div class="t" style="left:805.70px;top:129.60px;font-size:13.23px;color:#6e6e6e;letter-spacing:0.800px;;-webkit-text-stroke:0.2px currentColor">ab</div><div class="t" style="left:805.70px;top:140.40px;font-size:12.22px;color:#6e6e6e;letter-spacing:0.000px;;-webkit-text-stroke:0.2px currentColor">c</div><div class="t" style="left:829.90px;top:134.90px;font-size:12.38px;color:#585858;letter-spacing:0.033px;;-webkit-text-stroke:0.2px currentColor">자동 줄 바꿈</div><div class="t" style="left:830.30px;top:176.00px;font-size:12.37px;color:#585858;letter-spacing:-0.050px;;-webkit-text-stroke:0.2px currentColor">병합하고 가운데 맞춤</div><div class="t" style="left:997.40px;top:133.00px;font-size:14.41px;color:#111;letter-spacing:-1.400px;;-webkit-text-stroke:0.2px currentColor">일반</div><div class="t" style="left:1044.00px;top:170.50px;font-size:22.92px;color:#6a6a6a;letter-spacing:0.000px;">%</div><div class="t" style="left:1142.30px;top:172.00px;font-size:11.39px;color:#6a6a6a;letter-spacing:0.000px;">0</div><div class="t" style="left:1134.00px;top:182.50px;font-size:11.39px;color:#6a6a6a;letter-spacing:0.000px;">.00</div><div class="t" style="left:1167.50px;top:172.00px;font-size:11.39px;color:#6a6a6a;letter-spacing:0.000px;">.00</div><div class="t" style="left:1177.50px;top:182.50px;font-size:11.39px;color:#6a6a6a;letter-spacing:0.000px;">0</div><div class="t" style="left:1230.60px;top:172.30px;font-size:11.35px;color:#484848;letter-spacing:1.700px;;-webkit-text-stroke:0.2px currentColor">조건부</div><div class="t" style="left:1236.50px;top:188.50px;font-size:11.83px;color:#484848;letter-spacing:1.300px;;-webkit-text-stroke:0.2px currentColor">서식</div><div class="t" style="left:1292.80px;top:173.30px;font-size:11.52px;color:#484848;letter-spacing:0.500px;;-webkit-text-stroke:0.2px currentColor">표 서식</div><div class="t" style="left:1354.00px;top:172.30px;font-size:11.39px;color:#484848;letter-spacing:0.825px;;-webkit-text-stroke:0.2px currentColor">셀 스타일</div><div class="t" style="left:1455.70px;top:171.00px;font-size:12.43px;color:#484848;letter-spacing:0.300px;;-webkit-text-stroke:0.2px currentColor">삽입</div><div class="t" style="left:1520.80px;top:171.00px;font-size:12.40px;color:#484848;letter-spacing:-0.800px;;-webkit-text-stroke:0.2px currentColor">삭제</div><div class="t" style="left:1584.20px;top:171.00px;font-size:12.43px;color:#484848;letter-spacing:1.300px;;-webkit-text-stroke:0.2px currentColor">서식</div><div class="t" style="left:1687.90px;top:126.80px;font-size:12.42px;color:#484848;letter-spacing:0.400px;;-webkit-text-stroke:0.2px currentColor">자동 합계</div><div class="t" style="left:1688.90px;top:157.00px;font-size:11.96px;color:#484848;letter-spacing:0.300px;;-webkit-text-stroke:0.2px currentColor">채우기</div><div class="t" style="left:1687.90px;top:184.50px;font-size:12.05px;color:#484848;letter-spacing:0.800px;;-webkit-text-stroke:0.2px currentColor">지우기</div><div class="t" style="left:1771.40px;top:172.00px;font-size:11.69px;color:#484848;letter-spacing:0.533px;;-webkit-text-stroke:0.2px currentColor">정렬 및</div><div class="t" style="left:1779.40px;top:187.20px;font-size:12.16px;color:#484848;letter-spacing:1.600px;;-webkit-text-stroke:0.2px currentColor">필터</div><div class="t" style="left:1836.30px;top:172.00px;font-size:11.71px;color:#484848;letter-spacing:0.567px;;-webkit-text-stroke:0.2px currentColor">찾기 및</div><div class="t" style="left:1844.30px;top:187.20px;font-size:12.16px;color:#484848;letter-spacing:1.100px;;-webkit-text-stroke:0.2px currentColor">선택</div><div class="t" style="left:1925.50px;top:173.00px;font-size:11.83px;color:#484848;letter-spacing:0.500px;;-webkit-text-stroke:0.2px currentColor">추가</div><div class="t" style="left:1925.50px;top:187.20px;font-size:12.07px;color:#484848;letter-spacing:0.500px;;-webkit-text-stroke:0.2px currentColor">기능</div><div class="t" style="left:84.40px;top:224.70px;font-size:13.73px;color:#333;letter-spacing:-0.294px;-webkit-text-stroke:0.35px #333">복구된 통합 문서를 여시겠어요?</div><div class="t" style="left:291.40px;top:225.20px;font-size:13.81px;color:#333;letter-spacing:-0.335px;-webkit-text-stroke:0.2px #333">최근 변경 내용이 저장되었습니다. 사용자가 떠난 위치에서 계속 작업하시겠습니까?</div><div class="t" style="left:1890.30px;top:223.40px;font-size:14.78px;color:#222;letter-spacing:0.000px;;-webkit-text-stroke:0.2px currentColor">예</div><div class="t" style="left:1939.50px;top:223.40px;font-size:14.33px;color:#222;letter-spacing:-0.150px;;-webkit-text-stroke:0.2px currentColor">아니요</div><div class="t" style="left:57.00px;top:260.00px;font-size:16.57px;color:#222;letter-spacing:0.000px;transform:scaleX(0.9107);transform-origin:0 0;">T10</div><div class="t" style="left:143.70px;top:1121.40px;font-size:15.42px;color:#2e8b57;letter-spacing:0.767px;;-webkit-text-stroke:0.2px currentColor">회원목록</div><div class="t" style="left:61.70px;top:1159.30px;font-size:13.66px;color:#5c5c5c;letter-spacing:-0.411px;;-webkit-text-stroke:0.2px currentColor">대상을 선택한 다음</div><div class="t" style="left:183.70px;top:1157.30px;font-size:16.08px;color:#5c5c5c;letter-spacing:0.275px;;-webkit-text-stroke:0.2px currentColor">&amp;lt;Enter&amp;gt;</div><div class="t" style="left:281.30px;top:1158.10px;font-size:14.60px;color:#5c5c5c;letter-spacing:-0.905px;;-webkit-text-stroke:0.2px currentColor">키를 누르거나 [붙여넣기]를 선택합니다.</div><div class="t" style="left:1930.25px;top:1157.30px;font-size:17.39px;color:#777;letter-spacing:0.000px;transform:scaleX(0.9488);transform-origin:0 0;">100%</div><svg style="left:0;top:0" width="2048" height="1238" viewBox="0 0 2048 1238"><circle cx="68.6" cy="54.5" r="7.4" fill="#dedede" stroke="#cbcbcb" stroke-width="0.9"/><circle cx="94.5" cy="54.5" r="7.4" fill="#dedede" stroke="#cbcbcb" stroke-width="0.9"/><circle cx="120.5" cy="54.5" r="7.4" fill="#dedede" stroke="#cbcbcb" stroke-width="0.9"/><circle cx="68.6" cy="54.5" r="2.5" fill="#606060"/><circle cx="237" cy="54.45" r="7.6" fill="#f4f4f4" stroke="#d6d6d6" stroke-width="0.6"/><path d="M281.8 52 L290.3 44.3 L298.7 52 V61.5 Q298.7 62.5 297.7 62.5 H294 Q293 62.5 293 61.5 V57 Q293 55.6 291.6 55.6 H289 Q287.6 55.6 287.6 57 V61.5 Q287.6 62.5 286.6 62.5 H282.8 Q281.8 62.5 281.8 61.5 Z" fill="none" stroke="#7c7c7c" stroke-width="1.45" stroke-linejoin="round"/><path d="M318.5 45.7 H330.2 L333.8 49.3 V61.2 Q333.8 63 332 63 H318.5 Q316.7 63 316.7 61.2 V47.5 Q316.7 45.7 318.5 45.7 Z" fill="none" stroke="#7c7c7c" stroke-width="1.45" stroke-linejoin="round"/><path d="M320.8 45.7 V50.2 Q320.8 51.5 322.1 51.5 H326.9 Q328.2 51.5 328.2 50.2 V45.7 M319.5 63 V56.4 Q319.5 55.1 320.8 55.1 H330.3 Q331.6 55.1 331.6 56.4 V63" fill="none" stroke="#7c7c7c" stroke-width="1.4"/><path d="M357.5 63 H353.7 Q351.9 63 351.9 61.2 V47.5 Q351.9 45.7 353.7 45.7 H365 Q368.75 45.7 368.75 49.5 V51" fill="none" stroke="#7c7c7c" stroke-width="1.45" stroke-linejoin="round"/><path d="M355.8 45.7 V50.2 Q355.8 51.5 357.1 51.5 H361.6 Q362.9 51.5 362.9 50.2 V45.7 M354.6 63 V56.4 Q354.6 55.1 355.9 55.1 H363" fill="none" stroke="#7c7c7c" stroke-width="1.4"/><path d="M360.3 63.3 L369.2 55.2" stroke="#7c7c7c" stroke-width="3.6" stroke-linecap="round"/><path d="M387.8 44.5 V51.3 H394.8" fill="none" stroke="#7c7c7c" stroke-width="1.45" stroke-linejoin="miter"/><path d="M388.3 50.8 L393.3 45.9 Q397 43.3 401 45.2 Q404.6 47.3 404.1 51.2 Q403.6 54 401.2 56 L390.9 64.3" fill="none" stroke="#7c7c7c" stroke-width="1.45" stroke-linecap="round" stroke-linejoin="round"/><path d="M416.4 52.8 L419.9 56.4 L423.4 52.8" fill="none" stroke="#6a6a6a" stroke-width="1.9" stroke-linecap="round" stroke-linejoin="round"/><path d="M452.05 47.24 A8.8 8.8 0 1 0 455.5 52.17" fill="none" stroke="#7c7c7c" stroke-width="1.45" stroke-linecap="round"/><path d="M450.3 50.2 H454.4 V45.5" fill="none" stroke="#7c7c7c" stroke-width="1.6" stroke-linejoin="miter"/><circle cx="474.8" cy="54.4" r="1.35" fill="#727272"/><circle cx="481.9" cy="54.4" r="1.35" fill="#727272"/><circle cx="489" cy="54.4" r="1.35" fill="#727272"/><rect x="920" y="45.5" width="14" height="18.5" rx="1.5" fill="#f2f2f2" stroke="#dedede" stroke-width="0.8"/><rect x="917.2" y="49.2" width="10" height="10" rx="1" fill="#d6d6d6"/><path d="M920 51.5 L924.4 57 M924.4 51.5 L920 57" stroke="#f4f4f4" stroke-width="1"/><path d="M928.5 52 H932.5 M928.5 54.5 H932.5 M928.5 57 H932.5" stroke="#dcdcdc" stroke-width="0.9"/><path d="M1122 52.05 L1126.50 56.55 L1131 52.05" fill="none" stroke="#a6a6a6" stroke-width="1.4" stroke-linecap="round" stroke-linejoin="round"/><circle cx="1602.6" cy="53.3" r="6.2" fill="none" stroke="#9d9d9d" stroke-width="1.5"/><path d="M1607 57.8 L1611.5 62.3" stroke="#9d9d9d" stroke-width="1.6" stroke-linecap="round"/><circle cx="1973.5" cy="56" r="3.6" fill="none" stroke="#8f8f8f" stroke-width="1.3"/><path d="M1967.5 64 C1967.5 60.5 1979.5 60.5 1979.5 64 Z" fill="none" stroke="#8f8f8f" stroke-width="1.3"/><path d="M1978 45 L1987.5 45 L1987.5 51.5 L1983 51.5 L1980 54 L1980 51.5 L1978 51.5 Z" fill="#e9e9e9" stroke="#8f8f8f" stroke-width="1.2" stroke-linejoin="round"/><path d="M1814 87.5 L1829 87.5 Q1832 87.5 1832 90.5 L1832 98.5 Q1832 101.5 1829 101.5 L1821 101.5 L1816.5 105.5 L1816.5 101.5 L1814 101.5 Q1811 101.5 1811 98.5 L1811 90.5 Q1811 87.5 1814 87.5 Z" fill="none" stroke="#222" stroke-width="1.5" stroke-linejoin="round"/><path d="M1913 89 L1907 89 Q1905.5 89 1905.5 90.5 L1905.5 103 Q1905.5 104.5 1907 104.5 L1920 104.5 Q1921.5 104.5 1921.5 103 L1921.5 99" fill="none" stroke="#222" stroke-width="1.5" stroke-linejoin="round"/><path d="M1911 100 Q1911 92 1919.5 92 L1919.5 88.5 L1925 94 L1919.5 99.5 L1919.5 96 Q1914 96 1911 100 Z" fill="none" stroke="#222" stroke-width="1.4" stroke-linejoin="round"/><path d="M1972.5 93.75 L1977.00 98.25 L1981.5 93.75" fill="none" stroke="#222" stroke-width="1.6" stroke-linecap="round" stroke-linejoin="round"/><rect x="67.2" y="131.8" width="25" height="29" rx="1.2" fill="#fdfaf3" stroke="#f5b97c" stroke-width="2"/><path d="M72.3 135.4 V132.4 Q72.3 131 73.7 131 H76.3 Q76.8 126.6 79.5 126.6 Q82.2 126.6 82.7 131 H85.3 Q86.7 131 86.7 132.4 V135.4 Z" fill="#f9f9f9" stroke="#7a7a7a" stroke-width="1.3" stroke-linejoin="round"/><rect x="83.6" y="141.6" width="16.8" height="22.4" fill="#fbfbfb" stroke="#6f6f6f" stroke-width="1.5"/><path d="M108.3 142.6 L111.5 146.3 L114.7 142.6" fill="none" stroke="#606060" stroke-width="1.9" stroke-linecap="round" stroke-linejoin="round"/><path d="M132.1 124.3 L138.3 139 M139.8 124.3 L133.6 139" stroke="#6a6a6a" stroke-width="1.2" fill="none"/><circle cx="132.2" cy="141.3" r="2.6" fill="#fafafa" stroke="#6aa8e6" stroke-width="1.5"/><circle cx="139.7" cy="141.3" r="2.6" fill="#fafafa" stroke="#6aa8e6" stroke-width="1.5"/><path d="M134.3 169.6 H126.6 V152.8 H133.6 L135.6 154.8" fill="none" stroke="#6f6f6f" stroke-width="1.3" stroke-linejoin="round"/><path d="M134.6 156.8 H140.8 L145.6 161.6 V171.6 H134.6 Z" fill="#fafafa" stroke="#6f6f6f" stroke-width="1.3" stroke-linejoin="round"/><path d="M140.8 156.8 V161.6 H145.6" fill="none" stroke="#6f6f6f" stroke-width="1.1"/><path d="M137.4 165.7 H142.2 M137.4 168.2 H142.2" stroke="#8a8a8a" stroke-width="0.9"/><path d="M154.6 160.4 L158 164.2 L161.4 160.4" fill="none" stroke="#606060" stroke-width="1.9" stroke-linecap="round" stroke-linejoin="round"/><path d="M126.4 189.6 L134.8 186.2 L141.2 192.6 L134.3 199.6 Z" fill="#fdf1de" stroke="#f3a866" stroke-width="1.3" stroke-linejoin="round"/><path d="M130 193.5 L137 190" stroke="#f3a866" stroke-width="1"/><path d="M134.8 186.2 L138 183 L141.2 186.2 L145 182.4 Q145.8 181.6 146.6 182.4 L147 182.8 Q147.8 183.6 147 184.4 L143.2 188.2 L146.4 191.4 L141.2 192.6 Z" fill="#fafafa" stroke="#6f6f6f" stroke-width="1.3" stroke-linejoin="round"/><rect x="179.1" y="120" width="1" height="79.5" fill="#d0d0d0"/><path d="M408.6 139.48 L412.65 143.52 L416.7 139.48" fill="none" stroke="#444" stroke-width="1.75" stroke-linecap="round" stroke-linejoin="round"/><path d="M434 137.6 L438.5 135.4 V146.8 M441.4 137.6 L445.9 135.4 V146.8" fill="none" stroke="#111" stroke-width="1.6" stroke-linejoin="round"/><path d="M482 139.75 L485.50 143.25 L489 139.75" fill="none" stroke="#444" stroke-width="1.75" stroke-linecap="round" stroke-linejoin="round"/><path d="M518.5 135.5 L521 132.5 L523.5 135.5" fill="none" stroke="#5aa0e0" stroke-width="1.3" stroke-linecap="round"/><path d="M552 132 L554.3 134.5 L556.6 132" fill="none" stroke="#5aa0e0" stroke-width="1.3" stroke-linecap="round"/><rect x="575.7" y="120" width="1" height="79" fill="#d0d0d0"/><rect x="269.3" y="189.5" width="13.4" height="1.3" fill="#6a6a6a"/><path d="M296 180.75 L299.50 184.25 L303 180.75" fill="none" stroke="#636363" stroke-width="1.75" stroke-linecap="round" stroke-linejoin="round"/><rect x="317.5" y="171.5" width="1" height="22.0" fill="#d6d6d6"/><rect x="334.00" y="172.00" width="1.2" height="1.2" fill="#6e6e6e"/><rect x="334.00" y="187.80" width="1.2" height="1.2" fill="#6e6e6e"/><rect x="336.14" y="172.00" width="1.2" height="1.2" fill="#6e6e6e"/><rect x="336.14" y="187.80" width="1.2" height="1.2" fill="#6e6e6e"/><rect x="338.28" y="172.00" width="1.2" height="1.2" fill="#6e6e6e"/><rect x="338.28" y="187.80" width="1.2" height="1.2" fill="#6e6e6e"/><rect x="340.42" y="172.00" width="1.2" height="1.2" fill="#6e6e6e"/><rect x="340.42" y="187.80" width="1.2" height="1.2" fill="#6e6e6e"/><rect x="342.56" y="172.00" width="1.2" height="1.2" fill="#6e6e6e"/><rect x="342.56" y="187.80" width="1.2" height="1.2" fill="#6e6e6e"/><rect x="344.70" y="172.00" width="1.2" height="1.2" fill="#6e6e6e"/><rect x="344.70" y="187.80" width="1.2" height="1.2" fill="#6e6e6e"/><rect x="346.84" y="172.00" width="1.2" height="1.2" fill="#6e6e6e"/><rect x="346.84" y="187.80" width="1.2" height="1.2" fill="#6e6e6e"/><rect x="348.98" y="172.00" width="1.2" height="1.2" fill="#6e6e6e"/><rect x="348.98" y="187.80" width="1.2" height="1.2" fill="#6e6e6e"/><rect x="351.12" y="172.00" width="1.2" height="1.2" fill="#6e6e6e"/><rect x="351.12" y="187.80" width="1.2" height="1.2" fill="#6e6e6e"/><rect x="353.26" y="172.00" width="1.2" height="1.2" fill="#6e6e6e"/><rect x="353.26" y="187.80" width="1.2" height="1.2" fill="#6e6e6e"/><rect x="334.00" y="173.97" width="1.2" height="1.2" fill="#6e6e6e"/><rect x="353.30" y="173.97" width="1.2" height="1.2" fill="#6e6e6e"/><rect x="334.00" y="175.95" width="1.2" height="1.2" fill="#6e6e6e"/><rect x="353.30" y="175.95" width="1.2" height="1.2" fill="#6e6e6e"/><rect x="334.00" y="177.93" width="1.2" height="1.2" fill="#6e6e6e"/><rect x="353.30" y="177.93" width="1.2" height="1.2" fill="#6e6e6e"/><rect x="334.00" y="179.90" width="1.2" height="1.2" fill="#6e6e6e"/><rect x="353.30" y="179.90" width="1.2" height="1.2" fill="#6e6e6e"/><rect x="334.00" y="181.88" width="1.2" height="1.2" fill="#6e6e6e"/><rect x="353.30" y="181.88" width="1.2" height="1.2" fill="#6e6e6e"/><rect x="334.00" y="183.85" width="1.2" height="1.2" fill="#6e6e6e"/><rect x="353.30" y="183.85" width="1.2" height="1.2" fill="#6e6e6e"/><rect x="334.00" y="185.82" width="1.2" height="1.2" fill="#6e6e6e"/><rect x="353.30" y="185.82" width="1.2" height="1.2" fill="#6e6e6e"/><rect x="336.14" y="179.90" width="1.2" height="1.2" fill="#6e6e6e"/><rect x="338.28" y="179.90" width="1.2" height="1.2" fill="#6e6e6e"/><rect x="340.42" y="179.90" width="1.2" height="1.2" fill="#6e6e6e"/><rect x="346.84" y="179.90" width="1.2" height="1.2" fill="#6e6e6e"/><rect x="348.98" y="179.90" width="1.2" height="1.2" fill="#6e6e6e"/><rect x="351.12" y="179.90" width="1.2" height="1.2" fill="#6e6e6e"/><rect x="343.60" y="173.97" width="1.2" height="1.2" fill="#6e6e6e"/><rect x="343.60" y="175.95" width="1.2" height="1.2" fill="#6e6e6e"/><rect x="343.60" y="177.93" width="1.2" height="1.2" fill="#6e6e6e"/><rect x="343.60" y="181.88" width="1.2" height="1.2" fill="#6e6e6e"/><rect x="343.60" y="183.85" width="1.2" height="1.2" fill="#6e6e6e"/><rect x="343.60" y="185.82" width="1.2" height="1.2" fill="#6e6e6e"/><circle cx="344.2" cy="180.5" r="1.3" fill="none" stroke="#6e6e6e" stroke-width="0.9"/><rect x="334.2" y="190.6" width="19.8" height="1.5" fill="#555"/><path d="M364 180.50 L368.00 184.50 L372 180.50" fill="none" stroke="#636363" stroke-width="1.75" stroke-linecap="round" stroke-linejoin="round"/><rect x="386.2" y="171.5" width="1" height="22.0" fill="#d6d6d6"/><path d="M406.6 181 L412.4 187 L418.4 181.2 L413.2 175.6 Z" fill="#fafafa" stroke="#606060" stroke-width="1.4" stroke-linejoin="round"/><path d="M411.3 177.4 V174.6 Q411.3 172.6 413 172.6 Q414.8 172.6 414.8 174.6 V179.6" fill="none" stroke="#606060" stroke-width="1.2" stroke-linecap="round"/><path d="M420.6 185.2 V180.5 Q420.6 178 418.6 177.8" fill="none" stroke="#5a8fd0" stroke-width="1.8" stroke-linecap="round"/><rect x="402.8" y="188.2" width="21.2" height="5" rx="0.5" fill="#f5f56e"/><path d="M432.8 180.70 L436.40 184.30 L440 180.70" fill="none" stroke="#636363" stroke-width="1.75" stroke-linecap="round" stroke-linejoin="round"/><rect x="452.6" y="188.2" width="20.4" height="5.2" fill="#ef6a62"/><path d="M482 180.50 L486.00 184.50 L490 180.50" fill="none" stroke="#636363" stroke-width="1.75" stroke-linecap="round" stroke-linejoin="round"/><rect x="504.1" y="171.5" width="1" height="22.0" fill="#d6d6d6"/><path d="M532.5 185 Q532.5 190 531 193 M536.8 184.5 V192 M541 184.5 V193" stroke="#6aa8e6" stroke-width="1.2" fill="none"/><path d="M551 180.50 L555.00 184.50 L559 180.50" fill="none" stroke="#636363" stroke-width="1.75" stroke-linecap="round" stroke-linejoin="round"/><rect x="596.00" y="130.55" width="18.40" height="1.5" fill="#727272"/><rect x="599.13" y="135.95" width="12.14" height="1.5" fill="#727272"/><rect x="596.00" y="141.25" width="18.40" height="1.5" fill="#727272"/><rect x="630.00" y="134.55" width="18.00" height="1.5" fill="#727272"/><rect x="633.06" y="139.75" width="11.88" height="1.5" fill="#727272"/><rect x="630.00" y="145.25" width="18.00" height="1.5" fill="#727272"/><rect x="663.80" y="139.65" width="17.90" height="1.5" fill="#727272"/><rect x="666.84" y="145.05" width="11.81" height="1.5" fill="#727272"/><rect x="663.80" y="150.25" width="17.90" height="1.5" fill="#727272"/><rect x="698.9" y="130" width="1" height="23" fill="#d6d6d6"/><path d="M722 149.5 L735.5 136 M730 136 L735.5 136 L735.5 141.5" fill="none" stroke="#5aa0e0" stroke-width="1.4" stroke-linecap="round" stroke-linejoin="round"/><path d="M745 139.00 L749.00 143.00 L753 139.00" fill="none" stroke="#636363" stroke-width="1.75" stroke-linecap="round" stroke-linejoin="round"/><rect x="596.00" y="173.45" width="18.40" height="1.5" fill="#727272"/><rect x="596.00" y="178.65" width="12.14" height="1.5" fill="#727272"/><rect x="596.00" y="183.85" width="18.40" height="1.5" fill="#727272"/><rect x="596.00" y="189.15" width="12.14" height="1.5" fill="#727272"/><rect x="630.00" y="173.45" width="18.00" height="1.5" fill="#727272"/><rect x="633.06" y="178.65" width="11.88" height="1.5" fill="#727272"/><rect x="630.00" y="183.85" width="18.00" height="1.5" fill="#727272"/><rect x="633.06" y="189.15" width="11.88" height="1.5" fill="#727272"/><rect x="663.80" y="173.45" width="17.90" height="1.5" fill="#727272"/><rect x="669.89" y="178.65" width="11.81" height="1.5" fill="#727272"/><rect x="663.80" y="183.85" width="17.90" height="1.5" fill="#727272"/><rect x="669.89" y="189.15" width="11.81" height="1.5" fill="#727272"/><rect x="698.9" y="172" width="1" height="22" fill="#d6d6d6"/><rect x="717.00" y="173.45" width="18.00" height="1.5" fill="#727272"/><rect x="717.00" y="189.15" width="18.00" height="1.5" fill="#727272"/><rect x="727.00" y="178.65" width="8.00" height="1.5" fill="#727272"/><rect x="727.00" y="183.85" width="8.00" height="1.5" fill="#727272"/><path d="M724.5 182 H717.5 M720.5 179 L717.5 182 L720.5 185" fill="none" stroke="#5aa0e0" stroke-width="1.4" stroke-linecap="round" stroke-linejoin="round"/><rect x="750.60" y="173.45" width="18.20" height="1.5" fill="#727272"/><rect x="750.60" y="189.15" width="18.20" height="1.5" fill="#727272"/><rect x="760.60" y="178.65" width="8.20" height="1.5" fill="#727272"/><rect x="760.60" y="183.85" width="8.20" height="1.5" fill="#727272"/><path d="M750.8 182 H757.8 M754.8 179 L757.8 182 L754.8 185" fill="none" stroke="#5aa0e0" stroke-width="1.4" stroke-linecap="round" stroke-linejoin="round"/><rect x="785.7" y="120" width="1" height="79" fill="#d0d0d0"/><path d="M822.5 141.5 Q823.5 147.3 816 147.3 L813.6 147.3 M816.8 144.2 L813.6 147.3 L816.8 150.6" fill="none" stroke="#6aa8e6" stroke-width="1.4" stroke-linecap="round" stroke-linejoin="round"/><path d="M904.6 139.67 L908.65 143.72 L912.7 139.67" fill="none" stroke="#636363" stroke-width="1.75" stroke-linecap="round" stroke-linejoin="round"/><rect x="802.8" y="173.2" width="18.4" height="18" fill="#fafafa" stroke="#6e6e6e" stroke-width="1.6"/><rect x="803.4" y="176.6" width="17.2" height="10.8" fill="#f4f9fe" stroke="#6aa8e6" stroke-width="1.4"/><path d="M812 173.2 V176 M812 188 V191" stroke="#6e6e6e" stroke-width="1"/><path d="M806.6 182 H817.4 M809.2 179.6 L806.6 182 L809.2 184.4 M814.8 179.6 L817.4 182 L814.8 184.4" fill="none" stroke="#6aa8e6" stroke-width="1.4" stroke-linecap="round" stroke-linejoin="round"/><path d="M951.3 181.72 L955.05 185.47 L958.8 181.72" fill="none" stroke="#636363" stroke-width="1.75" stroke-linecap="round" stroke-linejoin="round"/><rect x="975.8" y="120" width="1" height="79" fill="#d0d0d0"/><path d="M1177.7 139.57 L1181.55 143.43 L1185.4 139.57" fill="none" stroke="#444" stroke-width="1.75" stroke-linecap="round" stroke-linejoin="round"/><rect x="996" y="176.8" width="19.5" height="12.5" fill="#f7f7f7" stroke="#727272" stroke-width="1.3"/><path d="M1003 179.5 Q999.5 179.5 999.5 183 Q999.5 186.5 1003 186.5" fill="none" stroke="#727272" stroke-width="1.1"/><rect x="1006" y="182" width="8.6" height="10.5" rx="4" fill="#fde6c8" stroke="#f0a860" stroke-width="1.2"/><path d="M1006.3 185.5 Q1010.3 187.5 1014.3 185.5 M1006.3 189 Q1010.3 191 1014.3 189" fill="none" stroke="#f0a860" stroke-width="1"/><path d="M1025.4 181.10 L1029.20 184.90 L1033 181.10" fill="none" stroke="#636363" stroke-width="1.75" stroke-linecap="round" stroke-linejoin="round"/><path d="M1089.5 175.5 Q1094.5 175.5 1094.5 181.5 Q1094.5 188 1086 191.5 L1085.5 190.3 Q1089.5 188 1089.8 184.8 Q1085 184.5 1085 180.3 Q1085 175.5 1089.5 175.5 Z" fill="#727272"/><rect x="1114.8" y="171.5" width="1" height="22.0" fill="#d6d6d6"/><path d="M1133 179 H1142 M1135.5 176.5 L1133 179 L1135.5 181.5" fill="none" stroke="#5aa0e0" stroke-width="1.3" stroke-linecap="round" stroke-linejoin="round"/><path d="M1165.5 188 H1175 M1172.5 185.5 L1175 188 L1172.5 190.5" fill="none" stroke="#5aa0e0" stroke-width="1.3" stroke-linecap="round" stroke-linejoin="round"/><rect x="1204.1" y="120" width="1" height="79" fill="#d0d0d0"/><rect x="1224.5" y="130.5" width="35" height="27" fill="#fff"/><rect x="1230.5" y="130.5" width="16.5" height="9" fill="#f9b9bd"/><rect x="1230.5" y="139.5" width="11" height="9" fill="#a9cbef"/><rect x="1230.5" y="148.5" width="19" height="9" fill="#f9b9bd"/><rect x="1224.6" y="130.5" width="34.90000000000009" height="27.0" fill="none" stroke="#727272" stroke-width="1.3"/><rect x="1229.85" y="130.5" width="1.3" height="27.0" fill="#727272"/><rect x="1253.35" y="130.5" width="1.3" height="27.0" fill="#727272"/><rect x="1224.6" y="138.85" width="34.90000000000009" height="1.3" fill="#727272"/><rect x="1224.6" y="147.85" width="34.90000000000009" height="1.3" fill="#727272"/><path d="M1247 130.5 V139.5 M1241.5 139.5 V148.5 M1249.5 148.5 V157.5" stroke="#e88088" stroke-width="1.1"/><path d="M1269 142.05 L1272.90 145.95 L1276.8 142.05" fill="none" stroke="#636363" stroke-width="1.75" stroke-linecap="round" stroke-linejoin="round"/><rect x="1289" y="130.5" width="37" height="27" fill="#fff"/><rect x="1300.5" y="139.5" width="25.5" height="18" fill="#a9cbef"/><rect x="1289" y="130.5" width="37" height="27.0" fill="none" stroke="#727272" stroke-width="1.3"/><rect x="1299.85" y="130.5" width="1.3" height="27.0" fill="#727272"/><rect x="1312.6499999999999" y="130.5" width="1.3" height="27.0" fill="#727272"/><rect x="1289" y="138.85" width="37" height="1.3" fill="#727272"/><rect x="1289" y="147.85" width="37" height="1.3" fill="#727272"/><path d="M1300.5 139.5 H1326 V157.5" fill="none" stroke="#7ea7d3" stroke-width="1.1"/><path d="M1325 139 Q1327 137.5 1326 140 L1312 157 L1309.5 154.5 Z" fill="#fafafa" stroke="#727272" stroke-width="1.2" stroke-linejoin="round"/><path d="M1309.5 154.5 L1312 157 Q1310 164.5 1298 164 Q1304.5 160.5 1304 157.5 Q1305 154 1309.5 154.5 Z" fill="#8fbbe8" stroke="#5d98d6" stroke-width="1"/><path d="M1334 142.05 L1337.90 145.95 L1341.8 142.05" fill="none" stroke="#636363" stroke-width="1.75" stroke-linecap="round" stroke-linejoin="round"/><rect x="1353.5" y="130.5" width="37" height="27" fill="#fff"/><rect x="1360" y="135.5" width="25" height="15.5" fill="#a9cbef"/><rect x="1353.5" y="130.5" width="37.0" height="27.0" fill="none" stroke="#727272" stroke-width="1.3"/><rect x="1359.35" y="130.5" width="1.3" height="27.0" fill="#727272"/><rect x="1384.35" y="130.5" width="1.3" height="27.0" fill="#727272"/><rect x="1353.5" y="134.85" width="37.0" height="1.3" fill="#727272"/><rect x="1353.5" y="150.35" width="37.0" height="1.3" fill="#727272"/><path d="M1390 139 Q1392 137.5 1391 140 L1377 157 L1374.5 154.5 Z" fill="#fafafa" stroke="#727272" stroke-width="1.2" stroke-linejoin="round"/><path d="M1374.5 154.5 L1377 157 Q1375 164.5 1363 164 Q1369.5 160.5 1369 157.5 Q1370 154 1374.5 154.5 Z" fill="#8fbbe8" stroke="#5d98d6" stroke-width="1"/><path d="M1398.6 142.07 L1402.45 145.93 L1406.3 142.07" fill="none" stroke="#636363" stroke-width="1.75" stroke-linecap="round" stroke-linejoin="round"/><rect x="1423.3" y="120" width="1" height="79" fill="#d0d0d0"/><rect x="1443" y="130.5" width="35.5" height="27" fill="#fff"/><rect x="1448" y="139.5" width="33" height="9" fill="#a9cbef"/><rect x="1443" y="130.5" width="35.59999999999991" height="27.0" fill="none" stroke="#727272" stroke-width="1.3"/><rect x="1453.85" y="130.5" width="1.3" height="27.0" fill="#727272"/><rect x="1465.85" y="130.5" width="1.3" height="27.0" fill="#727272"/><rect x="1443" y="138.85" width="35.59999999999991" height="1.3" fill="#727272"/><rect x="1443" y="147.85" width="35.59999999999991" height="1.3" fill="#727272"/><rect x="1448" y="139.5" width="33.3" height="9" fill="none" stroke="#5d98d6" stroke-width="1.1"/><path d="M1454 136 L1441.5 144 L1454 152 M1442 144 H1456" fill="none" stroke="#7fb3e6" stroke-width="1.5" stroke-linejoin="round"/><path d="M1488 142.10 L1491.80 145.90 L1495.6 142.10" fill="none" stroke="#636363" stroke-width="1.75" stroke-linecap="round" stroke-linejoin="round"/><rect x="1507.8" y="130.5" width="36" height="27" fill="#fff"/><rect x="1507.8" y="130.5" width="36.0" height="27.0" fill="none" stroke="#727272" stroke-width="1.3"/><rect x="1519.1499999999999" y="130.5" width="1.3" height="27.0" fill="#727272"/><rect x="1531.1499999999999" y="130.5" width="1.3" height="27.0" fill="#727272"/><rect x="1507.8" y="138.85" width="36.0" height="1.3" fill="#727272"/><rect x="1507.8" y="147.85" width="36.0" height="1.3" fill="#727272"/><rect x="1507" y="140.2" width="8" height="7.6" fill="#e9e9e9"/><path d="M1514 139.5 H1531 L1536 144 L1531 148.5 H1514 Z" fill="#a9cbef" stroke="#5d98d6" stroke-width="1.1"/><path d="M1530 136.5 L1545.5 151.5 M1545.5 136.5 L1530 151.5" stroke="#ee7b7b" stroke-width="1.3"/><path d="M1553 142.10 L1556.80 145.90 L1560.6 142.10" fill="none" stroke="#636363" stroke-width="1.75" stroke-linecap="round" stroke-linejoin="round"/><rect x="1572.8" y="130.5" width="36" height="27" fill="#fff"/><rect x="1582.5" y="139.5" width="16.5" height="9" fill="#a9cbef"/><rect x="1572.8" y="130.5" width="35.700000000000045" height="27.0" fill="none" stroke="#727272" stroke-width="1.3"/><rect x="1581.85" y="130.5" width="1.3" height="27.0" fill="#727272"/><rect x="1598.35" y="130.5" width="1.3" height="27.0" fill="#727272"/><rect x="1572.8" y="138.85" width="35.700000000000045" height="1.3" fill="#727272"/><rect x="1572.8" y="147.85" width="35.700000000000045" height="1.3" fill="#727272"/><path d="M1580 124.7 H1600.5 M1580 123 V126.5 M1600.5 123 V126.5" stroke="#6fa6dc" stroke-width="1.2"/><path d="M1618 142.07 L1621.85 145.93 L1625.7 142.07" fill="none" stroke="#636363" stroke-width="1.75" stroke-linecap="round" stroke-linejoin="round"/><rect x="1642.4" y="120" width="1" height="79" fill="#d0d0d0"/><path d="M1678.5 126 V125 H1663 L1671 133.5 L1663 142 H1678.5 V141" fill="none" stroke="#727272" stroke-width="1.4" stroke-linejoin="round"/><path d="M1748.8 131.82 L1752.15 135.18 L1755.5 131.82" fill="none" stroke="#636363" stroke-width="1.75" stroke-linecap="round" stroke-linejoin="round"/><rect x="1661" y="153.3" width="19.5" height="16.5" fill="#fafafa" stroke="#727272" stroke-width="1.3"/><path d="M1661 156.8 H1680.5" stroke="#727272" stroke-width="1.1"/><path d="M1670.7 159 V166.5 M1667.7 163.5 L1670.7 166.5 L1673.7 163.5" fill="none" stroke="#5aa0e0" stroke-width="1.3" stroke-linecap="round" stroke-linejoin="round"/><path d="M1733.3 160.32 L1736.65 163.68 L1740 160.32" fill="none" stroke="#636363" stroke-width="1.75" stroke-linecap="round" stroke-linejoin="round"/><path d="M1661 190.5 L1670.5 181 L1679.5 190 L1670 199.5 Z" fill="#fafafa" stroke="#b968c7" stroke-width="1.3" stroke-linejoin="round"/><path d="M1661 190.5 L1665.5 186 L1674.5 195 L1670 199.5 Z" fill="#e2a6ea" stroke="#b968c7" stroke-width="1.3" stroke-linejoin="round"/><path d="M1733.3 189.32 L1736.65 192.68 L1740 189.32" fill="none" stroke="#636363" stroke-width="1.75" stroke-linecap="round" stroke-linejoin="round"/><path d="M1767.4 130.5 H1779.3 V139.8" fill="none" stroke="#6aa8e6" stroke-width="1.3"/><path d="M1774.5 145.3 V147.8 M1767.6 148.3 H1781.4" stroke="#6e6e6e" stroke-width="1.3"/><ellipse cx="1774.55" cy="154" rx="5.3" ry="3.3" fill="none" stroke="#6e6e6e" stroke-width="1.3"/><path d="M1784.4 135.6 H1802.6 Q1803.8 135.6 1803.8 136.8 V138 Q1803.8 138.6 1803.3 139.2 L1795.6 146 V155.2 H1791 V146 L1783.6 139.2 Q1783.1 138.6 1783.1 138 V136.8 Q1783.1 135.6 1784.4 135.6 Z" fill="#fafafa" stroke="#6e6e6e" stroke-width="1.3" stroke-linejoin="round"/><path d="M1813.3 142.22 L1816.85 145.78 L1820.4 142.22" fill="none" stroke="#636363" stroke-width="1.75" stroke-linecap="round" stroke-linejoin="round"/><circle cx="1854.6" cy="139.4" r="13.2" fill="#fafafa" stroke="#727272" stroke-width="1.4"/><path d="M1845.5 149 L1831.3 163" stroke="#727272" stroke-width="1.4" stroke-linecap="round"/><path d="M1877.8 142.12 L1881.55 145.88 L1885.3 142.12" fill="none" stroke="#636363" stroke-width="1.75" stroke-linecap="round" stroke-linejoin="round"/><rect x="1903.1" y="120" width="1" height="79" fill="#d0d0d0"/><rect x="1921.5" y="125.7" width="36" height="36.5" fill="none" stroke="#ef9a82" stroke-width="1.3"/><rect x="1924.7" y="128.9000000000001" width="13.2" height="13.4" fill="#fdf3ef" stroke="#ef9a82" stroke-width="1.3"/><rect x="1924.7" y="145.5" width="13.2" height="13.4" fill="#fdf3ef" stroke="#ef9a82" stroke-width="1.3"/><rect x="1941.3" y="128.9000000000001" width="13.2" height="13.4" fill="#fdf3ef" stroke="#ef9a82" stroke-width="1.3"/><rect x="1941.3" y="145.5" width="13.2" height="13.4" fill="#fdf3ef" stroke="#ef9a82" stroke-width="1.3"/><path d="M143.7 263.6 L147.85 257.3 L152 263.6 Z" fill="#9a9a9a"/><path d="M143.7 272 L147.85 278.3 L152 272 Z" fill="#9a9a9a"/><rect x="153.45" y="251.7" width="1.5" height="33.30000000000001" fill="#c9c9c9"/><path d="M174.5 264 L187 276.5 M187 264 L174.5 276.5" stroke="#c6c6c6" stroke-width="2"/><path d="M210.5 270 L216 276 L227 264.5" fill="none" stroke="#c6c6c6" stroke-width="2"/><path d="M263.2 261.6 Q261.2 259.6 258.9 261.2 Q257.3 262.6 256.6 266.4 L254.6 275.8 Q253.6 279.6 250.6 279 Q249.6 278.8 249.3 278" fill="none" stroke="#2a2a2a" stroke-width="1.7" stroke-linecap="round"/><path d="M252.8 267.4 H259.6" stroke="#2a2a2a" stroke-width="1.4" stroke-linecap="round"/><path d="M256.2 268.2 Q258.6 266.4 259.8 268.8 L262.8 274.2 Q264.3 276.8 266.8 274.6 M266.6 267.8 Q265.2 266.6 263.6 268.4 L258.9 274.2 Q257.3 276.4 255.3 275.2" fill="none" stroke="#2a2a2a" stroke-width="1.6" stroke-linecap="round"/><rect x="277.5" y="259" width="1" height="20" fill="#d8d8d8"/><path d="M1983 264.5 L1993 264.5 L1988 272 Z" fill="#555"/><path d="M74 1124 L65 1130 L74 1136 Z" fill="#b8b8b8"/><path d="M93.5 1124 L102.5 1130 L93.5 1136 Z" fill="#b8b8b8"/><path d="M246.5 1129.8 H259 M252.75 1123.5 V1136" stroke="#444" stroke-width="2.2"/><rect x="275.8" y="1117" width="1" height="25" fill="#cfcfcf"/><rect x="1604.7" y="1156" width="18.5" height="18.5" rx="2.8" fill="#3a3a3a"/><path d="M1610.9 1156 V1174.5 M1617 1156 V1174.5 M1604.7 1162.2 H1623.2 M1604.7 1168.3 H1623.2" stroke="#c4c4c4" stroke-width="1.1"/><path d="M1655.6 1155.2 H1663 L1669.4 1161.6 V1174 Q1669.4 1175.6 1667.8 1175.6 H1655.6 Q1654 1175.6 1654 1174 V1156.8 Q1654 1155.2 1655.6 1155.2 Z M1663 1155.2 V1160 Q1663 1161.6 1664.6 1161.6 H1669.4" fill="none" stroke="#555" stroke-width="1.3" stroke-linejoin="round"/><rect x="1657.4" y="1164.6" width="9.6" height="8.2" rx="1" fill="none" stroke="#555" stroke-width="1.2"/><path d="M1661.4 1164.6 V1172.8 M1657.4 1168.6 H1667" stroke="#555" stroke-width="1.1"/><path d="M1701 1155.2 V1161.2 H1715.8 V1155.2 M1701 1175.7 V1169.2 H1715.8 V1175.7" fill="none" stroke="#555" stroke-width="1.3"/><path d="M1698.8 1165.3 H1718.3" stroke="#555" stroke-width="1.2" stroke-dasharray="1.8 1.4"/><rect x="1740.5" y="1165" width="11" height="1.5" fill="#777"/><circle cx="1824.2" cy="1166.6" r="9.9" fill="#000" opacity="0.08"/><circle cx="1824.2" cy="1165.9" r="9.8" fill="#fff" stroke="#dcdcdc" stroke-width="0.7"/><path d="M1898 1165.8 H1909 M1903.5 1160.3 V1171.3" stroke="#777" stroke-width="1.5"/><path d="M1975 966.4 H1967.3 V950 H1980.8 V955" fill="#fdf8ee" stroke="#eba75a" stroke-width="1.5"/><path d="M1969.6 953.2 V950.3 H1971.9 Q1972.3 946.8 1974.1 946.8 Q1975.9 946.8 1976.3 950.3 H1978.6 V953.2 Z" fill="#fafafa" stroke="#555" stroke-width="1.1" stroke-linejoin="round"/><rect x="1976.5" y="956.3" width="7.2" height="9.6" rx="0.8" fill="#fff" stroke="#2a2a2a" stroke-width="1.4"/><path d="M2002.8 566 V610" stroke="#1e6b3e" stroke-width="2.2" stroke-dasharray="5 3"/></svg></div></body></html>
